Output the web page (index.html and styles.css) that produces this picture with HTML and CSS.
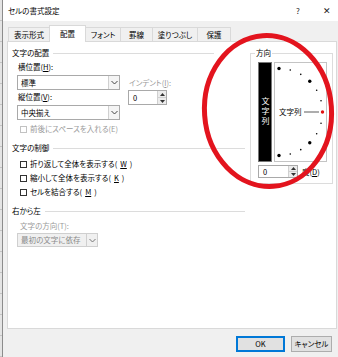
FILE: index.html
```html
<!DOCTYPE html>
<html lang="ja">
<head>
  <meta charset="UTF-8">
  <title>セルの書式設定</title>
  <link rel="stylesheet" href="styles.css">
</head>
<body>
  <div class="sheet-edge"></div>

  <div class="dialog">
    <div class="titlebar">
      <span class="title">セルの書式設定</span>
      <span class="help">?</span>
      <span class="close">✕</span>
    </div>

    <div class="tabs">
      <div class="tab tab-num">表示形式</div>
      <div class="tab tab-align active">配置</div>
      <div class="tab tab-font">フォント</div>
      <div class="tab tab-border">罫線</div>
      <div class="tab tab-fill">塗りつぶし</div>
      <div class="tab tab-protect">保護</div>
    </div>

    <div class="panel">
      <div class="left">
        <div class="heading heading-short"><span>文字の配置</span></div>

        <div class="align-row">
          <div class="align-col">
            <div class="label">横位置(<u>H</u>):</div>
            <div class="select">
              <span class="value">標準</span>
              <span class="drop"><svg width="7" height="5" viewBox="0 0 7 5"><path d="M0.5 1 L3.5 4 L6.5 1" fill="none" stroke="#444" stroke-width="1"/></svg></span>
            </div>
            <div class="label label-gap">縦位置(<u>V</u>):</div>
            <div class="select">
              <span class="value">中央揃え</span>
              <span class="drop"><svg width="7" height="5" viewBox="0 0 7 5"><path d="M0.5 1 L3.5 4 L6.5 1" fill="none" stroke="#444" stroke-width="1"/></svg></span>
            </div>
          </div>
          <div class="indent-col">
            <div class="label muted">インデント(<u>I</u>):</div>
            <div class="spin">
              <span class="value">0</span>
              <span class="spin-btns">
                <span class="spin-btn"><svg width="5" height="3" viewBox="0 0 5 3"><path d="M0 3 L2.5 0 L5 3 Z" fill="#333"/></svg></span>
                <span class="spin-btn"><svg width="5" height="3" viewBox="0 0 5 3"><path d="M0 0 L2.5 3 L5 0 Z" fill="#333"/></svg></span>
              </span>
            </div>
          </div>
        </div>

        <div class="check disabled first-check"><span class="box"></span>前後にスペースを入れる(E)</div>

        <div class="heading section"><span>文字の制御</span></div>
        <div class="check check-top"><span class="box"></span>折り返して全体を表示する(<u>W</u>)</div>
        <div class="check"><span class="box"></span>縮小して全体を表示する(<u>K</u>)</div>
        <div class="check"><span class="box"></span>セルを結合する(<u>M</u>)</div>

        <div class="heading section"><span>右から左</span></div>
        <div class="label sub muted">文字の方向(T):</div>
        <div class="select select-disabled">
          <span class="value">最初の文字に依存</span>
          <span class="drop"><svg width="7" height="5" viewBox="0 0 7 5"><path d="M0.5 1 L3.5 4 L6.5 1" fill="none" stroke="#777" stroke-width="1"/></svg></span>
        </div>
      </div>

      <fieldset class="orient">
        <legend>方向</legend>
        <div class="orient-body">
          <div class="dial-row">
            <div class="vertical-text"><span>文字列</span></div>
            <div class="dial">
              <svg width="51" height="98" viewBox="0 0 51 98">
                <circle cx="4" cy="5.5" r="1.7" fill="#000"/>
                <circle cx="15.26" cy="6.98" r="0.8" fill="#000"/>
                <circle cx="25.75" cy="11.33" r="0.8" fill="#000"/>
                <circle cx="34.76" cy="18.24" r="1.7" fill="#000"/>
                <circle cx="41.67" cy="27.25" r="0.8" fill="#000"/>
                <circle cx="46.02" cy="37.74" r="0.8" fill="#000"/>
                <circle cx="46.02" cy="60.26" r="0.8" fill="#000"/>
                <circle cx="41.67" cy="70.75" r="0.8" fill="#000"/>
                <circle cx="34.76" cy="79.76" r="1.7" fill="#000"/>
                <circle cx="25.75" cy="86.67" r="0.8" fill="#000"/>
                <circle cx="15.26" cy="91.02" r="0.8" fill="#000"/>
                <circle cx="4" cy="92.5" r="1.7" fill="#000"/>
                <text x="4" y="52" class="dial-label">文字列</text>
                <line x1="29" y1="49" x2="44" y2="49" stroke="#8a8a8a" stroke-width="1.4"/>
                <circle cx="47.5" cy="49" r="1.7" fill="#e01010"/>
              </svg>
            </div>
          </div>
          <div class="degree-row">
            <div class="spin spin-small">
              <span class="value">0</span>
              <span class="spin-btns">
                <span class="spin-btn"><svg width="5" height="3" viewBox="0 0 5 3"><path d="M0 3 L2.5 0 L5 3 Z" fill="#333"/></svg></span>
                <span class="spin-btn"><svg width="5" height="3" viewBox="0 0 5 3"><path d="M0 0 L2.5 3 L5 0 Z" fill="#333"/></svg></span>
              </span>
            </div>
            <span class="degree">度(<u>D</u>)</span>
          </div>
        </div>
      </fieldset>
    </div>

    <div class="footer">
      <button class="btn btn-default">OK</button>
      <button class="btn">キャンセル</button>
    </div>
  </div>

  <svg class="mark" width="338" height="357" viewBox="0 0 338 357">
    <ellipse cx="268" cy="111" rx="63.5" ry="75.5" transform="rotate(-4 268 111)" fill="none" stroke="#e3141e" stroke-width="5"/>
  </svg>
</body>
</html>
```

FILE: styles.css
```css
* {
  margin: 0;
  padding: 0;
  box-sizing: border-box;
}

body {
  width: 338px;
  height: 357px;
  display: flex;
  position: relative;
  overflow: hidden;
  background: #f0f0f0;
  font-family: "Noto Sans CJK JP", "Noto Sans", sans-serif;
  font-size: 7.5px;
  line-height: 12px;
  color: #000;
  font-feature-settings: "palt";
}

u {
  text-decoration-thickness: 1px;
  text-underline-offset: 1px;
}

.sheet-edge {
  width: 3px;
  flex-shrink: 0;
  background: repeating-linear-gradient(180deg, #e4e4e4 0, #e4e4e4 20px, #c4c4c4 20px, #c4c4c4 21px);
  border-right: 1px solid #8c8c8c;
}

.dialog {
  flex: 1;
  display: flex;
  flex-direction: column;
}

/* title bar */
.titlebar {
  height: 21px;
  flex-shrink: 0;
  background: #fff;
  display: flex;
  align-items: center;
  padding: 0 4px 0 5px;
}

.title {
  flex: 1;
}

.help {
  width: 10px;
  text-align: center;
  font-size: 8px;
  color: #222;
}

.close {
  width: 14px;
  margin-left: 17px;
  text-align: center;
  font-size: 9px;
  color: #222;
}

/* tabs */
.tabs {
  height: 20px;
  flex-shrink: 0;
  display: flex;
  align-items: flex-end;
  padding-left: 5px;
}

.tab {
  height: 14px;
  line-height: 13px;
  text-align: center;
  background: #f0f0f0;
  border: 1px solid #d9d9d9;
  border-bottom: none;
  margin-left: -1px;
  white-space: nowrap;
}

.tab-num { width: 42px; margin-left: 0; }
.tab-align { width: 37px; }
.tab-font { width: 36px; }
.tab-border { width: 33px; }
.tab-fill { width: 46px; }
.tab-protect { width: 34px; }

.tab.active {
  height: 17px;
  line-height: 16px;
  background: #fff;
  position: relative;
  z-index: 1;
  margin-bottom: -1px;
}

/* content panel */
.panel {
  height: 288px;
  flex-shrink: 0;
  margin: 0 1px 0 4px;
  background: #fff;
  border: 1px solid #d9d9d9;
  display: flex;
  align-items: flex-start;
}

.left {
  width: 242px;
  padding: 5px 0 0 4px;
}

.heading {
  display: flex;
  align-items: center;
  gap: 4px;
  margin-right: 5px;
}

.heading::after {
  content: '';
  flex: 1;
  height: 1px;
  background: #dcdcdc;
}

.heading-short {
  margin-right: 36px;
}

.heading.section {
  margin-top: 7px;
}

.label {
  padding-left: 1px;
  white-space: nowrap;
}

.label-gap {
  margin-top: 1px;
}

.muted {
  color: #9a9a9a;
}

.align-row {
  display: flex;
  margin-top: 2px;
}

.align-col {
  padding-left: 5px;
}

.select {
  width: 103px;
  height: 15px;
  margin-top: 2px;
  display: flex;
  background: #fff;
  border: 1px solid #a9a9a9;
}

.select .value {
  flex: 1;
  padding-left: 3px;
  line-height: 13px;
  white-space: nowrap;
}

.select .drop {
  width: 11px;
  display: flex;
  align-items: center;
  justify-content: center;
  background: #f4f4f4;
  border-left: 1px solid #d0d0d0;
}

.indent-col {
  margin-left: 8px;
  padding-top: 16px;
}

.spin {
  width: 39px;
  height: 15px;
  margin-top: 1px;
  display: flex;
  background: #fff;
  border: 1px solid #a9a9a9;
}

.spin .value {
  flex: 1;
  padding-left: 4px;
  line-height: 13px;
}

.spin-btns {
  width: 9px;
  display: flex;
  flex-direction: column;
  border-left: 1px solid #d0d0d0;
}

.spin-btn {
  flex: 1;
  display: flex;
  align-items: center;
  justify-content: center;
  background: #ececec;
}

.spin-btn + .spin-btn {
  border-top: 1px solid #d0d0d0;
}

.check {
  display: flex;
  align-items: center;
  gap: 3px;
  padding-left: 8px;
  margin-top: 2px;
  white-space: nowrap;
}

.check .box {
  width: 7px;
  height: 7px;
  border: 1px solid #333;
  background: #fff;
}

.check.disabled {
  color: #9a9a9a;
}

.check.disabled .box {
  border-color: #c2c2c2;
}

.first-check {
  margin-top: 3px;
}

.check-top {
  margin-top: 4px;
}

.sub {
  margin-top: 3px;
  padding-left: 8px;
}

.select-disabled {
  width: 81px;
  height: 14px;
  margin-top: 1px;
  margin-left: 5px;
  background: #f0f0f0;
  border-color: #cfcfcf;
  color: #8a8a8a;
}

.select-disabled .value {
  line-height: 12px;
}

.select-disabled .drop {
  background: #f0f0f0;
  border-left-color: #cfcfcf;
}

/* orientation group */
.orient {
  width: 83px;
  margin-top: 5px;
  border: 1px solid #dcdcdc;
  padding: 0 0 5px 7px;
}

.orient legend {
  margin-left: -3px;
  padding: 0 1px;
  line-height: 12px;
}

.dial-row {
  display: flex;
  margin-top: 3px;
}

.vertical-text {
  width: 14px;
  height: 100px;
  background: #000;
  border: 1px solid #777;
  display: flex;
  align-items: center;
  justify-content: center;
  margin-right: 2px;
}

.vertical-text span {
  writing-mode: vertical-rl;
  color: #fff;
  font-size: 8px;
  letter-spacing: 2px;
  line-height: 10px;
}

.dial {
  width: 53px;
  height: 100px;
  border: 1px solid #c4c4c4;
  background: #fff;
}

.dial svg {
  display: block;
}

.dial-label {
  font-size: 7.5px;
  fill: #000;
}

.degree-row {
  display: flex;
  align-items: center;
  margin-top: 3px;
}

.spin-small {
  width: 40px;
  height: 13px;
  margin-top: 0;
}

.spin-small .value {
  line-height: 11px;
}

.degree {
  margin-left: 4px;
}

/* buttons */
.footer {
  flex: 1;
  display: flex;
  justify-content: flex-end;
  align-items: flex-start;
  gap: 6px;
  padding: 7px 6px 0 0;
}

.btn {
  height: 16px;
  font: inherit;
  line-height: 14px;
  background: #e1e1e1;
  border: 1px solid #adadad;
  color: #000;
}

.btn-default {
  width: 49px;
  border-color: #0078d7;
  box-shadow: inset 0 0 0 1px #0078d7;
}

.btn + .btn {
  width: 41px;
}

.mark {
  position: absolute;
  left: 0;
  top: 0;
  pointer-events: none;
}
```
